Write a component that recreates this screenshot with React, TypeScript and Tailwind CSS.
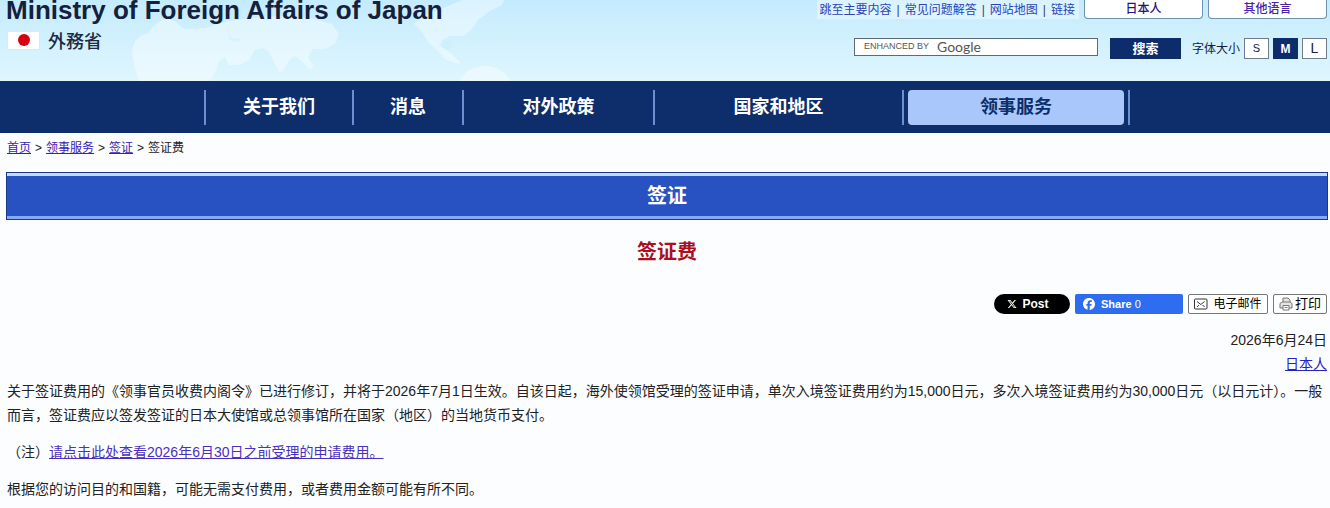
import { FaFacebook, FaXTwitter } from 'react-icons/fa6';

const utilityLinks = ['跳至主要内容', '常见问题解答', '网站地图', '链接'];

const navItems = [
  { label: '关于我们', width: 'w-[148px]' },
  { label: '消息', width: 'w-[110px]' },
  { label: '对外政策', width: 'w-[191px]' },
  { label: '国家和地区', width: 'w-[249px]' },
  { label: '领事服务', width: 'w-[226px]', active: true },
];

const crumbs = ['首页', '领事服务', '签证'];

// Pale continents behind the header
const HeaderMap = () => (
  <svg className="absolute left-0 top-0 h-[81px] w-[540px]" viewBox="0 0 540 81" aria-hidden="true">
    <g fill="#ffffff" fillOpacity="0.4">
      <path d="M132 54c0-12 6-19 17-21 4-8 12-14 20-14 8 1 10 8 17 10l20-1 18-6 26-4 30-2 30 2 22 6 7 10-4 10-10 5-12 0-5 8 6 10-4 2-8-7-6-6-6 3-6 10-4 4-5-9-6-12-6-4-8 2-6 10-10 5-10 0-4-8-6 4-4 12-6 8H139l-4-12z" />
      <path d="M414 24l14-10 20-8 14-6h42l-2 5-12 6-12 9-6 9-8 7-14 0-8 4-2 6 12 8 8 8 0 2-14-4-8-9-10-9-6-10z" />
      <path d="M460 81c2-8 12-14 24-15 12 0 22 6 26 15z" />
    </g>
    <g fill="#c9effc" fillOpacity="0.5">
      <path d="M228 33l4 5 10 1-4 3-8-2z" />
      <path d="M444 40l8 2-2 8-7-2z" />
    </g>
  </svg>
);

const MailIcon = () => (
  <svg className="h-[12px] w-[14px]" viewBox="0 0 14 12" fill="none" stroke="#333" aria-hidden="true">
    <rect x="0.5" y="1" width="12.5" height="10" rx="1" />
    <path d="M3 3.5l3.8 3 3.8-3M3 9l2-2M10.600 9l-2-2" />
  </svg>
);

const PrintIcon = () => (
  <svg className="h-[14px] w-[14px]" viewBox="0 0 14 14" fill="#e4e4e4" stroke="#777" aria-hidden="true">
    <path d="M4 5V1h5l2 2v2" />
    <path d="M1 6.500L3 5h8l2 1.500V11H1z" />
    <path d="M4 8.500h6V13H4z" fill="#fff" />
    <path d="M5.500 10.500h3" />
  </svg>
);

const Header = () => (
  <header className="relative h-[81px] bg-gradient-to-b from-[#c4ebfe] to-[#dff6fd]">
    <HeaderMap />
    <div className="relative flex justify-between pl-[6px] pr-[3px]">
      <div>
        <h1 className="text-[26px] font-bold leading-[20px] text-[#14203c]">
          Ministry of Foreign Affairs of Japan
        </h1>
        <div className="mt-[9px] flex items-center gap-[8px] pl-[1px]">
          <span className="flex h-[19px] w-[33px] items-center justify-center border border-[#dfe8ee] bg-white">
            <span className="h-[12px] w-[12px] rounded-full bg-[#d7000f]" />
          </span>
          <span
            lang="ja"
            className="font-['Noto_Sans_CJK_JP',sans-serif] text-[18px] font-medium leading-[22px] text-[#1c2a44]"
          >
            外務省
          </span>
        </div>
      </div>

      <div className="flex flex-col items-end gap-[19px]">
        <div className="flex gap-[5px]">
          <ul className="flex h-[19px] items-center bg-white/40 pl-[3px] pr-[4px] text-[12px] leading-[18px]">
            {utilityLinks.map((link, i) => (
              <li key={link} className="flex items-center">
                {i > 0 && <span className="px-[5px] text-[#34406a]">|</span>}
                <a href="#" className="text-[#2b45b8]">
                  {link}
                </a>
              </li>
            ))}
          </ul>
          <a
            href="#"
            className="flex h-[19px] w-[119px] items-center justify-center rounded-b-[4px] border border-t-0 border-[#6f93ad] bg-white text-[12px] font-medium text-[#23147e]"
          >
            日本人
          </a>
          <a
            href="#"
            className="flex h-[19px] w-[119px] items-center justify-center rounded-b-[4px] border border-t-0 border-[#6f93ad] bg-white text-[12px] font-medium text-[#4a23a8]"
          >
            其他语言
          </a>
        </div>

        <div className="flex items-start">
          <form className="flex items-start gap-[12px]" onSubmit={(e) => e.preventDefault()}>
            <label className="relative">
              <input
                type="search"
                aria-label="搜索"
                className="block h-[18px] w-[244px] border border-[#5d6b78] bg-white px-[8px] text-[12px]"
              />
              <span className="pointer-events-none absolute inset-y-0 left-[10px] flex items-center gap-[8px] text-[#555]">
                <span className="text-[9px]">ENHANCED BY</span>
                <span className="font-[Lato,sans-serif] text-[14px] leading-[16px]">Google</span>
              </span>
            </label>
            <button className="h-[21px] w-[71px] bg-[#0c2c6c] text-[13px] font-bold leading-[20px] text-white">
              搜索
            </button>
          </form>
          <div className="ml-[11px] flex items-center gap-[4px] text-[12px] text-[#14203c]">
            <span>字体大小</span>
            <button className="h-[21px] w-[25px] border border-[#6d7d8c] bg-white text-[11px]">S</button>
            <button className="h-[21px] w-[25px] bg-[#0c2c6c] font-bold text-white">M</button>
            <button className="h-[21px] w-[25px] border border-[#6d7d8c] bg-white text-[14px] leading-[19px]">L</button>
          </div>
        </div>
      </div>
    </div>
  </header>
);

const Nav = () => (
  <nav className="flex h-[52px] items-center justify-center bg-[#0d2d6b] pl-[4px]">
    <ul className="flex h-[35px] border-r-2 border-[#6b8fd0]">
      {navItems.map((item) => (
        <li key={item.label} className={`flex border-l-2 border-[#6b8fd0] ${item.width}`}>
          <a
            href="#"
            className={
              item.active
                ? 'mx-[4px] flex flex-1 items-center justify-center rounded-[4px] bg-[#a9c7fa] text-[18px] font-bold text-[#0d2d6b]'
                : 'flex flex-1 items-center justify-center text-[18px] font-bold text-white'
            }
          >
            {item.label}
          </a>
        </li>
      ))}
    </ul>
  </nav>
);

const ShareBar = () => (
  <div className="flex h-[20px] justify-end gap-[5px]">
    <button className="flex w-[76px] items-center justify-center gap-[5px] rounded-full bg-black pr-[8px] text-[12px] font-bold text-white">
      <FaXTwitter className="h-[10px] w-[10px]" />
      Post
    </button>
    <button className="flex w-[108px] items-center gap-[6px] rounded-[2px] bg-[#2f6df0] pl-[8px] text-[11px] font-bold text-white">
      <FaFacebook className="h-[12px] w-[12px]" />
      <span>
        Share <span className="font-normal">0</span>
      </span>
    </button>
    <button className="flex w-[80px] items-center justify-center gap-[5px] rounded-[2px] border border-[#777] bg-white text-[12px] text-black">
      <MailIcon />
      电子邮件
    </button>
    <button className="flex w-[54px] items-center justify-center gap-[2px] rounded-[2px] border border-[#777] bg-white text-[13px] text-black">
      <PrintIcon />
      打印
    </button>
  </div>
);

const App = () => {
  return (
    <div
      lang="zh-CN"
      className="min-h-screen bg-[#fcfdff] font-['Liberation_Sans','Noto_Sans_CJK_SC',sans-serif] text-[#222] [text-autospace:no-autospace]"
    >
      <Header />
      <Nav />
      <main className="pl-[6px] pr-[2px]">
        <ol className="flex gap-[4px] px-[1px] pt-[6px] text-[12px] leading-[18px]">
          {crumbs.map((crumb) => (
            <li key={crumb} className="flex gap-[4px]">
              <a href="#" className="text-[#3a22b0] underline">
                {crumb}
              </a>
              <span>&gt;</span>
            </li>
          ))}
          <li>签证费</li>
        </ol>

        <div className="mt-[15px] border border-[#1b3a86] bg-[#2852c1]">
          <h2 className="border-y-[3px] border-t-[#c3dcfb] border-b-[#87a8f4] text-center text-[20px] font-bold leading-[40px] text-white">
            签证
          </h2>
        </div>

        <h3 className="mt-[17px] text-center text-[20px] font-bold leading-[30px] text-[#a8101c]">签证费</h3>

        <div className="mt-[27px] px-[1px]">
          <ShareBar />
        </div>

        <div className="mt-[14px] px-[1px] text-right text-[14px] leading-[24px]">
          <p>2026年6月24日</p>
          <a href="#" className="text-[#2a22c0] underline">
            日本人
          </a>
        </div>

        <div className="mt-[3px] space-y-[13px] px-[1px] text-[14px] leading-[24px]">
          <p>
            关于签证费用的《领事官员收费内阁令》已进行修订，并将于2026年7月1日生效。自该日起，海外使领馆受理的签证申请，单次入境签证费用约为15,000日元，多次入境签证费用约为30,000日元（以日元计）。一般而言，签证费应以签发签证的日本大使馆或总领事馆所在国家（地区）的当地货币支付。
          </p>
          <p>
            （注）
            <a href="#" className="text-[#4a2fc0] underline">
              请点击此处查看2026年6月30日之前受理的申请费用。
            </a>
          </p>
          <p>根据您的访问目的和国籍，可能无需支付费用，或者费用金额可能有所不同。</p>
        </div>
      </main>
    </div>
  );
};

export default App;
